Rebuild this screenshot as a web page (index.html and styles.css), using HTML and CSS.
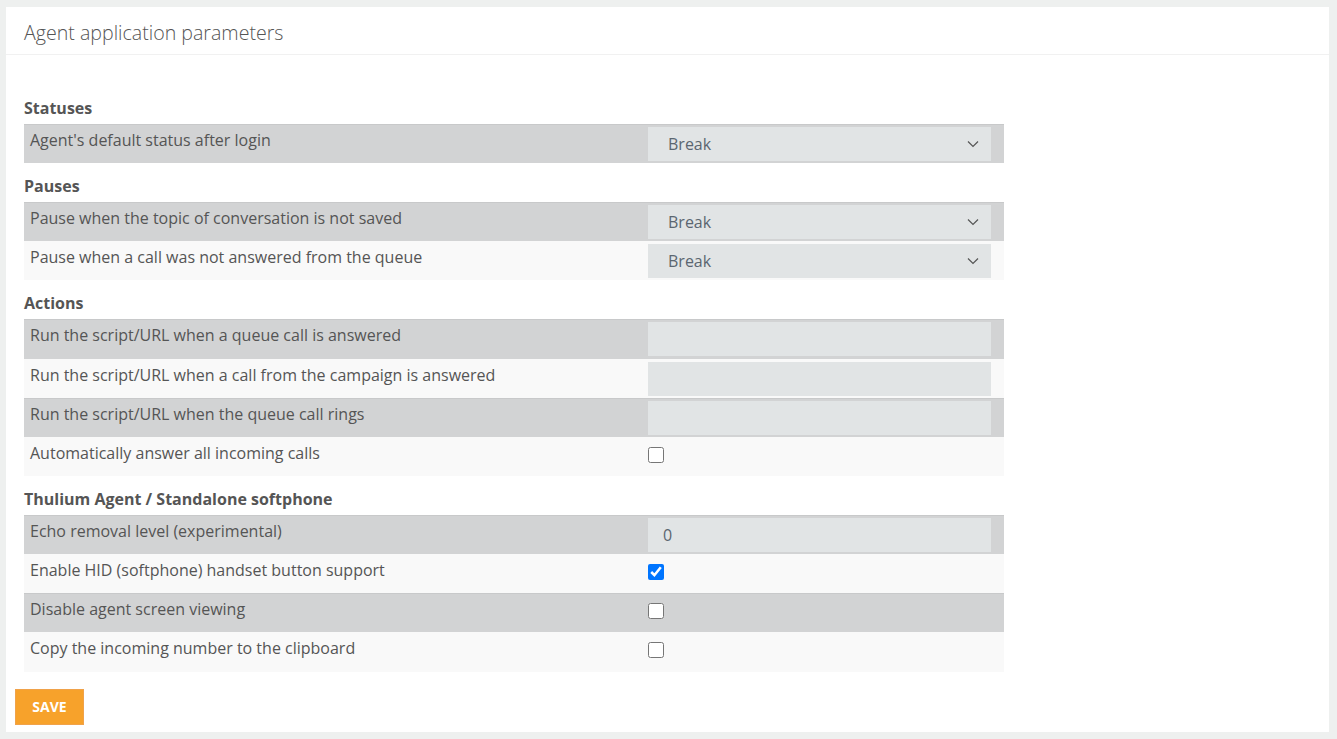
FILE: index.html
```html
<!DOCTYPE html>
<html lang="en">
<head>
    <meta charset="utf-8" />
    <title>Agent application parameters</title>
    <link rel="stylesheet" href="styles.css">
</head>
<body>
    <div class="card">
        <div class="card-header">Agent application parameters</div>
        <div class="card-body">
            <h3 class="section-title">Statuses</h3>
            <div class="param-row dark">
                <div class="param-label">Agent's default status after login</div>
                <div class="param-control">
                    <div class="select-box"><span>Break</span><svg width="12" height="8" viewBox="0 0 12 8"><path d="M1 1.5l5 5 5-5" fill="none" stroke="#555" stroke-width="1.2"/></svg></div>
                </div>
            </div>

            <h3 class="section-title">Pauses</h3>
            <div class="param-row dark">
                <div class="param-label">Pause when the topic of conversation is not saved</div>
                <div class="param-control">
                    <div class="select-box"><span>Break</span><svg width="12" height="8" viewBox="0 0 12 8"><path d="M1 1.5l5 5 5-5" fill="none" stroke="#555" stroke-width="1.2"/></svg></div>
                </div>
            </div>
            <div class="param-row light">
                <div class="param-label">Pause when a call was not answered from the queue</div>
                <div class="param-control">
                    <div class="select-box"><span>Break</span><svg width="12" height="8" viewBox="0 0 12 8"><path d="M1 1.5l5 5 5-5" fill="none" stroke="#555" stroke-width="1.2"/></svg></div>
                </div>
            </div>

            <h3 class="section-title">Actions</h3>
            <div class="param-row dark">
                <div class="param-label">Run the script/URL when a queue call is answered</div>
                <div class="param-control"><input class="text-input" type="text"></div>
            </div>
            <div class="param-row light">
                <div class="param-label">Run the script/URL when a call from the campaign is answered</div>
                <div class="param-control"><input class="text-input" type="text"></div>
            </div>
            <div class="param-row dark">
                <div class="param-label">Run the script/URL when the queue call rings</div>
                <div class="param-control"><input class="text-input" type="text"></div>
            </div>
            <div class="param-row light">
                <div class="param-label">Automatically answer all incoming calls</div>
                <div class="param-control"><input class="check" type="checkbox"></div>
            </div>

            <h3 class="section-title">Thulium Agent / Standalone softphone</h3>
            <div class="param-row dark">
                <div class="param-label">Echo removal level (experimental)</div>
                <div class="param-control"><input class="text-input num" type="text" value="0"></div>
            </div>
            <div class="param-row light">
                <div class="param-label">Enable HID (softphone) handset button support</div>
                <div class="param-control"><input class="check" type="checkbox" checked></div>
            </div>
            <div class="param-row dark">
                <div class="param-label">Disable agent screen viewing</div>
                <div class="param-control"><input class="check" type="checkbox"></div>
            </div>
            <div class="param-row light">
                <div class="param-label">Copy the incoming number to the clipboard</div>
                <div class="param-control"><input class="check" type="checkbox"></div>
            </div>
        </div>
        <div class="card-footer">
            <button class="save-btn" type="button">SAVE</button>
        </div>
    </div>
</body>
</html>
```

FILE: styles.css
```css
body {
    font-family: 'Open Sans', 'Liberation Sans', sans-serif;
    background-color: #eef0ef;
    color: #555;
    margin: 0;
    padding: 7px 8px 7px 6px;
}

.card {
    background-color: #fff;
    height: 725px;
    box-sizing: border-box;
    overflow: hidden;
}

.card-header {
    height: 48px;
    box-sizing: border-box;
    padding: 12px 18px 0;
    font-size: 19.6px;
    font-weight: 300;
    color: #555;
    border-bottom: 1px solid #f1f1f1;
}

.card-body {
    padding: 30px 0 0 18px;
    width: 980px;
}

.section-title {
    margin: 11px 0 4px;
    font-size: 16px;
    line-height: 24px;
    font-weight: 700;
    color: #555;
}

.param-row {
    display: grid;
    grid-template-columns: 624px 1fr;
    height: 39.15px;
    box-sizing: border-box;
}

.param-row.dark {
    background-color: #d2d3d4;
    border-top: 1px solid #c8c9ca;
}

.param-row.light {
    background-color: #f9f9f9;
}

.param-label {
    padding: 3px 6px 0;
    font-size: 16px;
    line-height: 24px;
    color: #555;
}

.light .param-label {
    padding-top: 4px;
}

.param-control {
    padding: 2px 13px 0 0;
    display: flex;
    align-items: flex-start;
}

.light .param-control {
    padding-top: 3px;
}

.select-box {
    width: 100%;
    height: 34px;
    background-color: #e1e4e5;
    display: flex;
    align-items: center;
    justify-content: space-between;
    padding: 0 12px 0 20px;
    box-sizing: border-box;
    font-size: 16px;
    color: #5b6670;
}

.text-input {
    width: 100%;
    height: 34px;
    border: none;
    background-color: #e1e4e5;
    padding: 0 15px;
    box-sizing: border-box;
    font-family: inherit;
    font-size: 16px;
    color: #5b6670;
    outline: none;
}

.check {
    margin: 7px 0 0;
    width: 16px;
    height: 16px;
}

.card-footer {
    padding: 17px 0 8px 9px;
}

.save-btn {
    background-color: #f7a22b;
    border: 1px solid #f0a24a;
    color: #fff;
    font-family: 'Open Sans', sans-serif;
    font-weight: 700;
    font-size: 14px;
    width: 69px;
    height: 36px;
    padding: 0;
    cursor: pointer;
}
```
